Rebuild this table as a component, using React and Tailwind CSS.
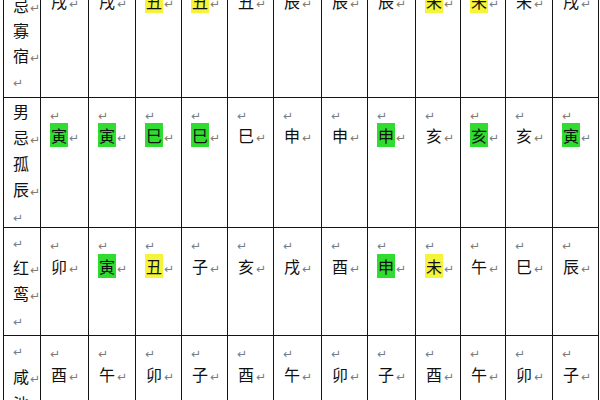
const COLS =
  "grid grid-cols-[37px_48px_47px_46px_46px_46px_48px_46px_48px_45px_45px_47px_46px]";

const rows = [
  {
    h: "h-[130px]",
    lead: "leading-[25px]",
    first: "h-[21px]",
    left: [["女"], ["忌", true], ["寡"], ["宿", true], ["", true]],
    cells: [
      ["戌"], ["戌"], ["丑", "y"], ["丑", "y"], ["丑"], ["辰"],
      ["辰"], ["辰"], ["未", "y"], ["未", "y"], ["未"], ["戌"],
    ],
  },
  {
    h: "h-[130px]",
    lead: "leading-[26px]",
    first: "h-[24px]",
    left: [["男"], ["忌", true], ["孤"], ["辰", true], ["", true]],
    cells: [
      ["寅", "g"], ["寅", "g"], ["巳", "g"], ["巳", "g"], ["巳"], ["申"],
      ["申"], ["申", "g"], ["亥"], ["亥", "g"], ["亥"], ["寅", "g"],
    ],
  },
  {
    h: "h-[108px]",
    lead: "leading-[26px]",
    first: "h-[25px]",
    left: [["", true], ["红", true], ["鸾", true], ["", true]],
    cells: [
      ["卯"], ["寅", "g"], ["丑", "y"], ["子"], ["亥"], ["戌"],
      ["酉"], ["申", "g"], ["未", "y"], ["午"], ["巳"], ["辰"],
    ],
  },
  {
    h: "h-[120px]",
    lead: "leading-[27px]",
    first: "h-[25px]",
    left: [["", true], ["咸", true], ["池", true], ["", true]],
    cells: [
      ["酉"], ["午"], ["卯"], ["子"], ["酉"], ["午"],
      ["卯"], ["子"], ["酉"], ["午"], ["卯"], ["子"],
    ],
  },
];

// Word paragraph mark
const Mark = ({ up }) => (
  <span
    className={
      "font-['DejaVu_Sans',sans-serif] text-[12px] leading-none text-[#7c7c7c] " +
      (up ? "" : "ml-[1px]")
    }
  >
    ↵
  </span>
);

const Char = ({ ch, hl }) => {
  let bg = "";
  if (hl === "g") bg = "bg-[#2fdc2f]";
  if (hl === "y") bg = "bg-[#f6f43a]";
  return <span className={bg + " px-[1px]"}>{ch}</span>;
};

export default function App() {
  return (
    <div className="w-[600px] h-[400px] overflow-hidden bg-white text-[#111] font-['Noto_Sans_CJK_SC',sans-serif] text-[16px]">
      <div className="ml-[3px] mt-[-33px] w-[595px] border-l border-t border-[#141414]">
        {rows.map((r, ri) => (
          <div key={ri} className={COLS}>
            <div className={r.h + " " + r.lead + " border-r border-b border-[#141414] pl-[9px] overflow-hidden"}>
              {r.left.map(([t, m], i) => (
                <div key={i} className="whitespace-nowrap">
                  {t}
                  {m && <Mark up={!t} />}
                </div>
              ))}
            </div>
            {r.cells.map(([ch, hl], ci) => (
              <div key={ci} className={r.h + " border-r border-b border-[#141414] pl-[9px] overflow-hidden"}>
                <div className={r.first + " pt-[7px] leading-none"}>
                  <Mark up />
                </div>
                <div className={r.lead + " whitespace-nowrap"}>
                  <Char ch={ch} hl={hl} />
                  <Mark />
                </div>
              </div>
            ))}
          </div>
        ))}
      </div>
    </div>
  );
}
